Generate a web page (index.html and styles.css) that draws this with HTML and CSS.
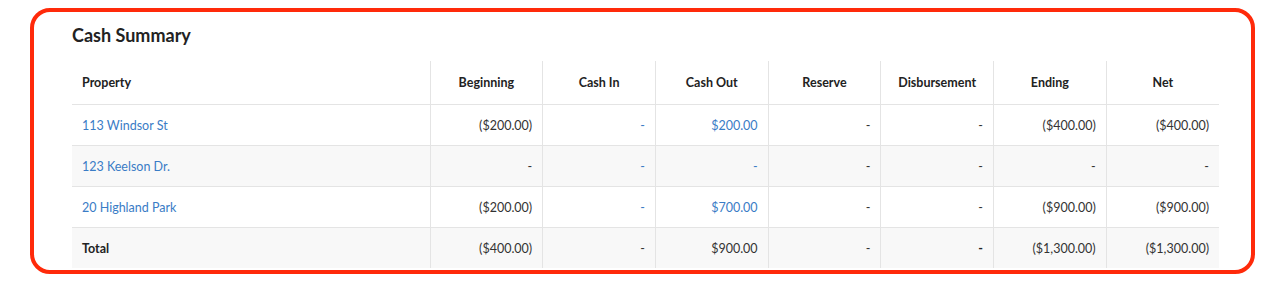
FILE: index.html
```html
<!DOCTYPE html>
<html>
<head>
<meta charset="utf-8">
<link rel="stylesheet" href="styles.css">
</head>
<body>
<div class="frame">
  <h2 class="title">Cash Summary</h2>
  <table class="summary">
    <colgroup>
      <col class="c-prop">
      <col span="7" class="c-num">
    </colgroup>
    <thead>
      <tr>
        <th class="left">Property</th>
        <th>Beginning</th>
        <th>Cash In</th>
        <th>Cash Out</th>
        <th>Reserve</th>
        <th>Disbursement</th>
        <th>Ending</th>
        <th>Net</th>
      </tr>
    </thead>
    <tbody>
      <tr>
        <td class="left"><a class="link" href="#">113 Windsor St</a></td>
        <td>($200.00)</td>
        <td><a class="link" href="#">-</a></td>
        <td><a class="link" href="#">$200.00</a></td>
        <td>-</td>
        <td>-</td>
        <td>($400.00)</td>
        <td>($400.00)</td>
      </tr>
      <tr class="alt">
        <td class="left"><a class="link" href="#">123 Keelson Dr.</a></td>
        <td>-</td>
        <td><a class="link" href="#">-</a></td>
        <td><a class="link" href="#">-</a></td>
        <td>-</td>
        <td>-</td>
        <td>-</td>
        <td>-</td>
      </tr>
      <tr>
        <td class="left"><a class="link" href="#">20 Highland Park</a></td>
        <td>($200.00)</td>
        <td><a class="link" href="#">-</a></td>
        <td><a class="link" href="#">$700.00</a></td>
        <td>-</td>
        <td>-</td>
        <td>($900.00)</td>
        <td>($900.00)</td>
      </tr>
      <tr class="alt total">
        <td class="left strong">Total</td>
        <td>($400.00)</td>
        <td>-</td>
        <td>$900.00</td>
        <td>-</td>
        <td class="strong">-</td>
        <td>($1,300.00)</td>
        <td>($1,300.00)</td>
      </tr>
    </tbody>
  </table>
</div>
</body>
</html>
```

FILE: styles.css
```css
html, body {
  margin: 0;
  padding: 0;
  background: #ffffff;
}

body {
  font-family: Lato, "Open Sans", "Liberation Sans", sans-serif;
  color: #222222;
  padding: 8px 15px 0 30px;
}

.frame {
  width: 1225px;
  height: 266px;
  box-sizing: border-box;
  border: 4px solid #ff2a0a;
  border-radius: 20px;
  padding: 12px 32px 0 38px;
  overflow: hidden;
}

.title {
  margin: 0 0 15px 0;
  font-size: 18px;
  line-height: 22px;
  font-weight: 700;
  color: #222222;
}

.summary {
  width: 1147px;
  border-collapse: collapse;
  table-layout: fixed;
  font-size: 12.5px;
}

.c-prop {
  width: 358px;
}

.summary th {
  height: 43px;
  padding: 0 10px;
  font-weight: 700;
  text-align: center;
  border-left: 1px solid #e4e4e4;
  border-bottom: 1px solid #e4e4e4;
  color: #222222;
}

.summary td {
  height: 40px;
  padding: 0 10px;
  text-align: right;
  border-left: 1px solid #e4e4e4;
  border-bottom: 1px solid #e4e4e4;
  color: #333333;
}

.summary th.left,
.summary td.left {
  text-align: left;
  border-left: none;
}

.summary tr.alt td {
  background: #f8f8f8;
}

.summary tr.total td {
  border-bottom: none;
}

.strong {
  font-weight: 700;
}

.summary td.strong {
  color: #222222;
}

.link {
  color: #3a7cc6;
  text-decoration: none;
}
```
